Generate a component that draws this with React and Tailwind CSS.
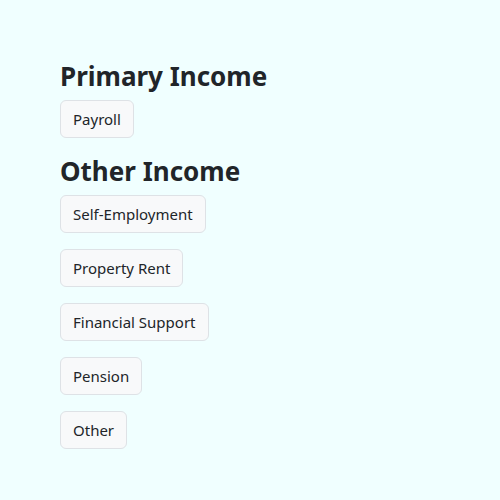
function Btn({ children }) {
  return (
    <div className="mb-4">
      <button className="inline-block rounded-md border border-[#dee2e6] bg-[#f8f9fa] px-3 py-[6px] text-[15px] leading-6 text-[#212529]">
        {children}
      </button>
    </div>
  );
}

export default function App() {
  return (
    <div
      className="min-h-[500px] bg-[#f0ffff] px-[60px] pt-[59px] text-[#212529]"
      style={{ fontFamily: "'Noto Sans', sans-serif" }}
    >
      <h3 className="mb-[7px] text-[26px] font-bold leading-[34px]">Primary Income</h3>
      <Btn>Payroll</Btn>
      <h3 className="mb-[7px] text-[26px] font-bold leading-[34px]">Other Income</h3>
      <Btn>Self-Employment</Btn>
      <Btn>Property Rent</Btn>
      <Btn>Financial Support</Btn>
      <Btn>Pension</Btn>
      <Btn>Other</Btn>
    </div>
  );
}
